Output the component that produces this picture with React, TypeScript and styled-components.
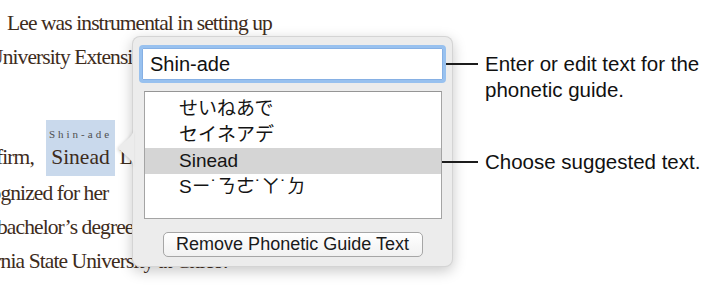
import React from "react";
import styled, { createGlobalStyle } from "styled-components";

const GlobalStyle = createGlobalStyle`
  html, body { margin: 0; padding: 0; background: #ffffff; }
  body { width: 710px; height: 286px; overflow: hidden; }
`;

const Stage = styled.div`
  position: relative;
  width: 710px;
  height: 286px;
  overflow: hidden;
  background: #ffffff;
`;

const Doc = styled.div`
  padding-top: 6px;
  font-family: "Liberation Serif", "Times New Roman", serif;
  font-size: 21.5px;
  line-height: 34px;
  color: #3e2c1c;
  letter-spacing: -0.9px;
`;

const Paragraph = styled.div<{ $gap: number }>`
  margin-top: ${(p) => p.$gap}px;
`;

const Line = styled.div<{ $shift: number }>`
  white-space: nowrap;
  margin-left: ${(p) => p.$shift}px;
`;

const RubyWord = styled.span`
  display: inline-block;
  margin-left: 12px;
  padding: 0 3px;
  background: #c9d9ec;
  vertical-align: baseline;
`;

const RubyText = styled.span`
  display: block;
  height: 19px;
  line-height: 28px;
  font-size: 11px;
  letter-spacing: 3px;
  text-align: center;
  color: #4f4f4f;
`;

const RubyBase = styled.span`
  display: block;
  line-height: 37px;
  letter-spacing: 0;
  text-align: center;
`;

const Overlay = styled.div`
  position: absolute;
  left: 132px;
  top: 36px;
  display: flex;
  align-items: flex-start;
`;

const Popover = styled.div`
  position: relative;
  box-sizing: border-box;
  width: 321px;
  height: 231px;
  padding: 8px 6px 0 6px;
  background: #ececec;
  border: 1px solid rgba(0, 0, 0, 0.1);
  border-radius: 8px;
  box-shadow: 0 4px 14px rgba(0, 0, 0, 0.22);
  display: flex;
  flex-direction: column;
  font-family: "Liberation Sans", Arial, "Noto Sans CJK JP", sans-serif;
  color: #141414;
`;

const Arrow = styled.svg`
  position: absolute;
  left: -15px;
  top: 91px;
  width: 16px;
  height: 40px;
  filter: drop-shadow(-1px 1px 1.5px rgba(0, 0, 0, 0.16));
`;

const Field = styled.input`
  box-sizing: border-box;
  width: 307px;
  height: 38px;
  margin: 0;
  padding: 0 0 0 8px;
  border: 3px solid #98c1ef;
  border-radius: 4px;
  box-shadow: inset 0 0 0 1px #86b0e4;
  background: #ffffff;
  outline: none;
  font-family: "Liberation Sans", Arial, sans-serif;
  font-size: 20px;
  color: #111111;
`;

const List = styled.div`
  box-sizing: border-box;
  width: 298px;
  height: 128px;
  margin: 8px 0 0 5px;
  padding-top: 4px;
  background: #ffffff;
  border: 1px solid #a4a4a4;
  border-top-color: #959595;
`;

const Row = styled.div<{ $selected?: boolean; $cjk?: boolean }>`
  height: 26px;
  line-height: 26px;
  padding-left: 34px;
  font-size: 19px;
  white-space: nowrap;
  background: ${(p) => (p.$selected ? "#d5d5d5" : "transparent")};
  font-family: ${(p) =>
    p.$cjk
      ? '"Liberation Sans", Arial, "Noto Sans CJK TC", "Noto Sans CJK JP", sans-serif'
      : '"Liberation Sans", Arial, sans-serif'};
`;

const Button = styled.button`
  box-sizing: border-box;
  align-self: center;
  width: 260px;
  height: 25px;
  margin-top: 13px;
  padding: 0;
  border: 1px solid #a6a6a6;
  border-radius: 5px;
  background: linear-gradient(#ffffff, #f1f1f1);
  font-family: "Liberation Sans", Arial, sans-serif;
  font-size: 18px;
  line-height: 23px;
  color: #1a1a1a;
`;

const Callouts = styled.div`
  position: relative;
  margin-left: -11px;
  padding-top: 15px;
  display: flex;
  flex-direction: column;
`;

const Callout = styled.div<{ $gap: number }>`
  display: flex;
  align-items: flex-start;
  margin-top: ${(p) => p.$gap}px;
`;

const Leader = styled.div<{ $inset: number; $length: number }>`
  flex: none;
  margin: 12px 0 0 ${(p) => p.$inset}px;
  width: ${(p) => p.$length}px;
  height: 2px;
  background: #1c1c1c;
`;

const CalloutText = styled.div`
  width: 225px;
  margin-left: 7px;
  font-family: "Liberation Sans", Arial, sans-serif;
  font-size: 20.5px;
  line-height: 26px;
  color: #111111;
`;

export default function App() {
  return (
    <Stage>
      <GlobalStyle />
      <Doc>
        <Paragraph $gap={0}>
          <Line $shift={7}>Lee was instrumental in setting up</Line>
          <Line $shift={-12}>University Extension program</Line>
        </Paragraph>
        <Paragraph $gap={46}>
          <Line $shift={-4}>
            firm,
            <RubyWord>
              <RubyText>Shin-ade</RubyText>
              <RubyBase>Sinead</RubyBase>
            </RubyWord>{" "}
            Lee was
          </Line>
          <Line $shift={-33}>recognized for her</Line>
          <Line $shift={-3}>bachelor’s degree</Line>
          <Line $shift={-54}>California State University at Chico.</Line>
        </Paragraph>
      </Doc>

      <Overlay>
        <Popover>
          <Arrow viewBox="0 0 16 40" aria-hidden="true">
            <path
              d="M16 0 Q16 5 11 10 L1.2 18.6 Q0 20 1.2 21.4 L11 30 Q16 35 16 40 Z"
              fill="#ececec"
            />
          </Arrow>
          <Field defaultValue="Shin-ade" readOnly />
          <List>
            <Row $cjk>せいねあで</Row>
            <Row $cjk>セイネアデ</Row>
            <Row $selected>Sinead</Row>
            <Row $cjk>Sㄧ˙ㄋㄜ˙ㄚ˙ㄉ</Row>
          </List>
          <Button type="button">Remove Phonetic Guide Text</Button>
        </Popover>
        <Callouts>
          <Callout $gap={0}>
            <Leader $inset={4} $length={32} />
            <CalloutText>Enter or edit text for the phonetic guide.</CalloutText>
          </Callout>
          <Callout $gap={46}>
            <Leader $inset={0} $length={36} />
            <CalloutText>Choose suggested text.</CalloutText>
          </Callout>
        </Callouts>
      </Overlay>
    </Stage>
  );
}
